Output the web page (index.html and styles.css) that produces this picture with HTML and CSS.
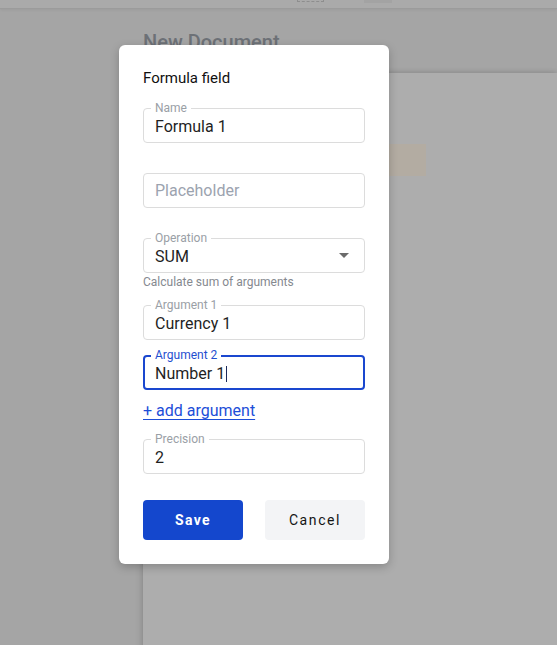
FILE: index.html
```html
<!DOCTYPE html>
<html lang="en">
<head>
<meta charset="utf-8">
<title>Formula field</title>
<link rel="stylesheet" href="styles.css">
</head>
<body>
<div class="topbar">
  <div class="tb-dashed"></div>
  <div class="tb-rect"></div>
</div>
<main class="main">
  <h1 class="doc-title">New Document</h1>
  <div class="doc-page">
    <div class="doc-block"></div>
  </div>
</main>

<div class="modal">
  <div class="modal-title">Formula field</div>

  <div class="field mt-name">
    <span class="field-label">Name</span>
    <span class="field-value">Formula 1</span>
  </div>

  <div class="field mt-30">
    <span class="field-value placeholder">Placeholder</span>
  </div>

  <div class="field mt-30">
    <span class="field-label">Operation</span>
    <span class="field-value">SUM</span>
    <span class="select-arrow"></span>
  </div>
  <div class="helper">Calculate sum of arguments</div>

  <div class="field mt-16">
    <span class="field-label">Argument 1</span>
    <span class="field-value">Currency 1</span>
  </div>

  <div class="field focused mt-15">
    <span class="field-label">Argument 2</span>
    <span class="field-value">Number 1<span class="caret"></span></span>
  </div>

  <a class="add-link" href="#">+ add argument</a>

  <div class="field mt-link">
    <span class="field-label">Precision</span>
    <span class="field-value">2</span>
  </div>

  <div class="actions">
    <button class="btn btn-save">Save</button>
    <button class="btn btn-cancel">Cancel</button>
  </div>
</div>
</body>
</html>
```

FILE: styles.css
```css
html, body {
  margin: 0;
  padding: 0;
  height: 100%;
  overflow: hidden;
}
body {
  background: #a5a5a5;
  font-family: Roboto, "Liberation Sans", Arial, sans-serif;
  position: relative;
}

.topbar {
  height: 8px;
  background: #aaaaaa;
  border-bottom: 1px solid #9b9b9b;
  display: flex;
  align-items: flex-start;
  padding-left: 297px;
  gap: 40px;
  box-shadow: 0 1px 3px rgba(0,0,0,0.06);
}
.tb-dashed {
  width: 25px;
  height: 1px;
  border: 1px dashed #8e8e8e;
  border-top: none;
}
.tb-rect {
  width: 28px;
  height: 3px;
  background: #a3a3a3;
}

.main {
  padding-left: 143px;
}
.doc-title {
  margin: 0;
  padding-top: 21px;
  height: 43px;
  font-size: 20px;
  font-weight: 500;
  line-height: 24px;
  color: #6d7177;
}
.doc-page {
  height: 600px;
  background: #adadad;
  box-shadow: -2px 0 6px rgba(0,0,0,0.12), 0 -2px 4px rgba(0,0,0,0.06);
  padding: 71px 0 0 246px;
  box-sizing: border-box;
}
.doc-block {
  width: 37px;
  height: 32px;
  background: #b3aca2;
}

.modal {
  position: absolute;
  left: 119px;
  top: 45px;
  width: 270px;
  box-sizing: border-box;
  padding: 23px 24px 24px;
  background: #ffffff;
  border-radius: 6px;
  box-shadow: 0 3px 10px rgba(0,0,0,0.22);
  display: flex;
  flex-direction: column;
}
.modal-title {
  font-size: 15px;
  font-weight: 400;
  line-height: 20px;
  color: #111111;
}

.field {
  position: relative;
  height: 35px;
  box-sizing: border-box;
  border: 1px solid #dcdcdc;
  border-radius: 4px;
  padding: 0 11px;
  display: flex;
  align-items: center;
}
.mt-name { margin-top: 20px; }
.mt-30 { margin-top: 30px; }
.mt-16 { margin-top: 16px; }
.mt-15 { margin-top: 15px; }
.mt-link { margin-top: 18px; }

.field-label {
  position: absolute;
  left: 7px;
  top: -8px;
  padding: 0 4px;
  background: #ffffff;
  font-size: 12px;
  line-height: 14px;
  color: #9aa0a6;
}
.field-value {
  font-size: 16px;
  line-height: 20px;
  color: #1f1f1f;
  padding-top: 2px;
  display: flex;
  align-items: center;
}
.placeholder {
  color: #9ca3af;
  padding-top: 1px;
}
.select-arrow {
  position: absolute;
  right: 15px;
  top: 14px;
  width: 0;
  height: 0;
  border-left: 5px solid transparent;
  border-right: 5px solid transparent;
  border-top: 5px solid #6b6b6b;
}
.helper {
  margin-top: 2px;
  font-size: 12px;
  line-height: 14px;
  color: #85898f;
}

.field.focused {
  border: 2px solid #1a47cf;
  padding: 0 10px;
}
.field.focused .field-label {
  color: #1f4fd0;
  left: 6px;
  top: -9px;
}
.caret {
  display: inline-block;
  width: 1px;
  height: 16px;
  margin-left: 1px;
  background: #1b2a5a;
}

.add-link {
  margin-top: 11px;
  align-self: flex-start;
  font-size: 16px;
  line-height: 20px;
  color: #1d4ed8;
  text-decoration: underline;
  text-underline-offset: 3px;
}

.actions {
  margin-top: 26px;
  display: flex;
  justify-content: space-between;
}
.btn {
  width: 100px;
  height: 40px;
  border: none;
  border-radius: 4px;
  font-family: Roboto, "Liberation Sans", Arial, sans-serif;
  font-size: 14px;
  letter-spacing: 1.4px;
  cursor: pointer;
}
.btn-save {
  background: #1447cd;
  color: #ffffff;
  font-weight: 700;
}
.btn-cancel {
  background: #f3f4f6;
  color: #141414;
  font-weight: 400;
  letter-spacing: 1.6px;
}
```
